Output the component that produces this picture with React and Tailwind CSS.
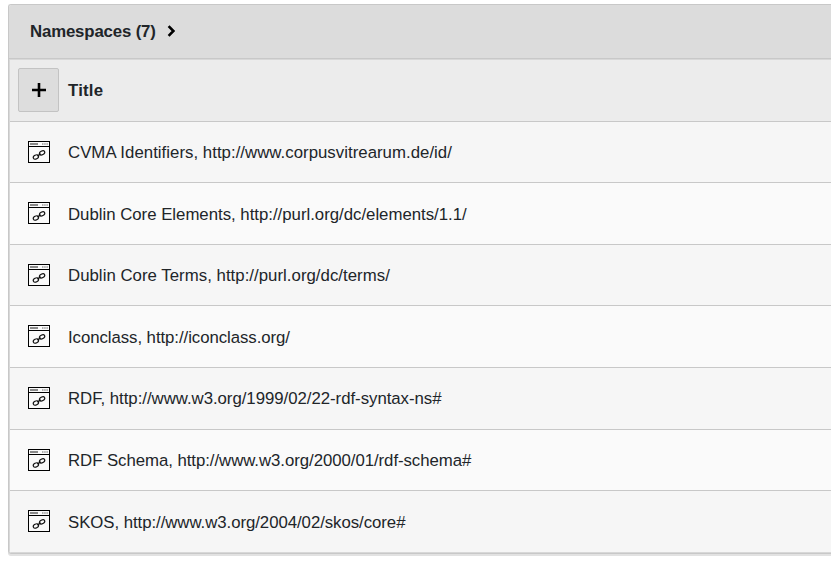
const rows = [
  { text: 'CVMA Identifiers, http://www.corpusvitrearum.de/id/', h: 'h-[61px]', bg: 'bg-[#f6f6f6]', label: 'mt-[19px] tracking-[0.03px]' },
  { text: 'Dublin Core Elements, http://purl.org/dc/elements/1.1/', h: 'h-[62px]', bg: 'bg-[#fafafa]', label: 'mt-5 tracking-[-0.01px]' },
  { text: 'Dublin Core Terms, http://purl.org/dc/terms/', h: 'h-[61px]', bg: 'bg-[#f6f6f6]', label: 'mt-[19px] tracking-[0.03px]' },
  { text: 'Iconclass, http://iconclass.org/', h: 'h-[62px]', bg: 'bg-[#fafafa]', label: 'mt-5 tracking-[-0.06px]' },
  { text: 'RDF, http://www.w3.org/1999/02/22-rdf-syntax-ns#', h: 'h-[62px]', bg: 'bg-[#f6f6f6]', label: 'mt-[19px] tracking-[-0.03px]' },
  { text: 'RDF Schema, http://www.w3.org/2000/01/rdf-schema#', h: 'h-[61px]', bg: 'bg-[#fafafa]', label: 'mt-[19px] tracking-[-0.05px]' },
  { text: 'SKOS, http://www.w3.org/2004/02/skos/core#', h: 'h-[62px]', bg: 'bg-[#f6f6f6]', label: 'mt-5 tracking-[-0.05px]' },
];

function LinkPageIcon() {
  return (
    <svg width="22" height="22" viewBox="0 0 22 22" fill="none" className="mt-[19px] shrink-0">
      <rect x="0.5" y="0.5" width="21" height="21" fill="#fafafa" stroke="#000" />
      <path d="M1 5.5H21" stroke="#000" />
      <path d="M2 3H10" stroke="#8a8a8a" strokeWidth="2" />
      <path d="M14 3H20" stroke="#b0b0b0" strokeWidth="2" strokeDasharray="1.5 0.7" />
      <ellipse cx="7.9" cy="16" rx="2.8" ry="1.9" transform="rotate(-28 7.9 16)" stroke="#111" strokeWidth="1.15" />
      <ellipse cx="14.1" cy="11.9" rx="2.8" ry="1.9" transform="rotate(-28 14.1 11.9)" stroke="#111" strokeWidth="1.15" />
      <path d="M9.3 15L12.7 12.8" stroke="#111" strokeWidth="1.4" />
    </svg>
  );
}

export default function App() {
  return (
    <div className="h-[569px] w-full overflow-hidden bg-white pt-1 pl-2 font-['Liberation_Sans',Arial,sans-serif] text-[16.8px] leading-6 text-[#212529]">
      <section className="w-full overflow-hidden rounded-l-[3px] border-y border-l border-[#c8c8c8] shadow-[0_2px_0_#e2e2e2]">
        <h2 className="flex h-[54px] items-center border-b border-[#c8c8c8] bg-[#dcdcdc] pl-[21px] font-bold">
          <span className="tracking-[-0.15px]">Namespaces (7)</span>
          <svg width="9" height="12" viewBox="0 0 9 12" className="mb-px ml-[11.5px]" fill="none">
            <path d="M1.6 1.2L6.4 6L1.6 10.8" stroke="#000" strokeWidth="2.6" />
          </svg>
        </h2>
        <div className="border-t border-l border-[#d8d8d8]">
          <div className="flex h-[62px] items-start border-b border-[#c8c8c8] bg-[#ececec] pt-2 pl-2 font-bold">
            <button className="mr-[9px] flex h-11 w-[41px] items-center justify-center rounded-[2px] border border-[#c3c3c3] bg-[#dddddd]">
              <svg width="15" height="14" viewBox="0 0 15 14" fill="none">
                <path d="M8 0V14M1 7H15" stroke="#000" strokeWidth="2.6" />
              </svg>
            </button>
            <span className="mt-[11px] tracking-[0.2px]">Title</span>
          </div>
          {rows.map((row) => (
            <div key={row.text} className={`flex items-start gap-[18px] border-b border-[#c8c8c8] pl-[18px] last:border-b-[#d8d8d8] ${row.h} ${row.bg}`}>
              <LinkPageIcon />
              <span className={`whitespace-nowrap ${row.label}`}>{row.text}</span>
            </div>
          ))}
        </div>
      </section>
    </div>
  );
}
